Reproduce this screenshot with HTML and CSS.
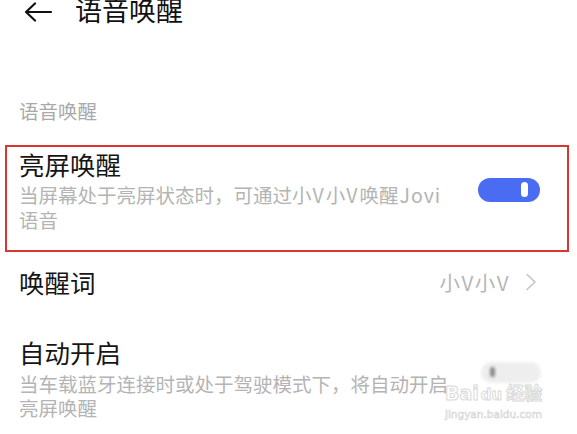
FILE: index.html
```html
<!DOCTYPE html>
<html lang="zh-CN">
<head>
<meta charset="utf-8">
<title>语音唤醒</title>
<link rel="stylesheet" href="styles.css">
</head>
<body>
<div class="page">
  <header class="topbar">
    <svg class="back" width="28" height="20" viewBox="0 0 28 20" aria-hidden="true">
      <path d="M27 10 H2 M11 1.5 L2 10 L11 18.5" fill="none" stroke="#111" stroke-width="2.2" stroke-linecap="round" stroke-linejoin="round"/>
    </svg>
    <h1 class="page-title">语音唤醒</h1>
  </header>

  <div class="section-label">语音唤醒</div>

  <div class="item item-highlight">
    <div class="item-text">
      <div class="item-title">亮屏唤醒</div>
      <div class="item-desc">当屏幕处于亮屏状态时，可通过小<span class="latin">V</span>小<span class="latin">V</span>唤醒<span class="latin">Jovi</span>语音</div>
    </div>
    <div class="switch switch-on"><span class="knob"></span></div>
  </div>

  <div class="item item-link">
    <div class="item-title">唤醒词</div>
    <div class="item-value">
      <span>小<span class="latin">V</span>小<span class="latin">V</span></span>
      <svg class="chevron" width="12" height="18" viewBox="0 0 12 18" aria-hidden="true">
        <path d="M2 1.5 L10 9 L2 16.5" fill="none" stroke="#c4c4c4" stroke-width="1.6" stroke-linecap="round" stroke-linejoin="round"/>
      </svg>
    </div>
  </div>

  <div class="item item-auto">
    <div class="item-text">
      <div class="item-title">自动开启</div>
      <div class="item-desc desc-tight">当车载蓝牙连接时或处于驾驶模式下，将自动开启亮屏唤醒</div>
    </div>
    <div class="switch switch-faded"><span class="knob-dark"></span></div>
  </div>

  <div class="watermark">
    <div class="wm-logo"><span class="wm-bai">Bai</span><span class="wm-du">du</span><span class="wm-jy">经验</span></div>
    <div class="wm-url">jingyan.baidu.com</div>
  </div>
</div>
</body>
</html>
```

FILE: styles.css
```css
html, body {
  margin: 0;
  padding: 0;
  background: #ffffff;
}

body {
  font-family: "Noto Sans CJK SC", "Noto Sans", sans-serif;
  color: #151515;
  overflow: hidden;
}

.page {
  position: relative;
  width: 577px;
  height: 434px;
  overflow: hidden;
}

.topbar {
  display: flex;
  align-items: center;
  height: 40px;
  margin-top: -10px;
  padding-left: 24px;
  gap: 23px;
}

.back {
  display: block;
  margin-top: 3px;
}

.page-title {
  margin: 0;
  font-size: 27px;
  font-weight: 400;
  line-height: 40px;
  color: #111;
}

.section-label {
  margin-top: 68px;
  padding-left: 19px;
  font-size: 19.5px;
  line-height: 26px;
  color: #a9a9a9;
}

.item {
  display: flex;
  justify-content: space-between;
  align-items: flex-start;
}

.item-highlight {
  margin: 21px 8px 0 5px;
  border: 2px solid #dc3430;
  padding: 2px 27px 18px 12px;
}

.item-text {
  width: 432px;
}

.item-title {
  font-size: 25.5px;
  line-height: 30px;
  color: #151515;
}

.item-desc {
  margin-top: 3px;
  font-size: 19.5px;
  line-height: 25px;
  color: #b4b4b4;
}

.latin {
  letter-spacing: 1px;
  margin: 0 1px;
}

.desc-tight {
  margin-top: 5px;
  line-height: 24px;
}

.switch {
  position: relative;
  width: 62px;
  height: 24px;
  border-radius: 12px;
  flex: none;
}

.switch-on {
  margin-top: 29px;
  background: #4a6cf2;
}

.knob {
  position: absolute;
  left: 43px;
  top: 4px;
  width: 7px;
  height: 15px;
  border-radius: 3.5px;
  background: #ffffff;
}

.item-link {
  margin-top: 15px;
  padding: 0 40px 0 19px;
  align-items: center;
}

.item-value {
  display: flex;
  align-items: center;
  gap: 15px;
  font-size: 20.5px;
  line-height: 30px;
  color: #b6b6b6;
}

.item-value .latin {
  letter-spacing: 0;
  margin: 0 1.5px;
}

.chevron {
  display: block;
}

.item-auto {
  margin-top: 40px;
  padding: 0 36px 0 19px;
}

.switch-faded {
  margin-top: 25px;
  background: #eeeeee;
  filter: blur(1.5px);
  width: 60px;
  height: 21px;
}

.knob-dark {
  position: absolute;
  left: 9px;
  top: 5px;
  width: 5px;
  height: 10px;
  border-radius: 2px;
  background: #8a8a8a;
}

.watermark {
  position: absolute;
  left: 445px;
  top: 380px;
  width: 110px;
  color: #e4e4e4;
  pointer-events: none;
}

.wm-logo {
  display: flex;
  align-items: baseline;
  font-family: "DejaVu Sans", sans-serif;
  font-size: 19px;
  line-height: 24px;
  font-weight: 700;
  color: #ffffff;
  -webkit-text-stroke: 1px #d9d9d9;
}

.wm-du {
  margin-left: 2px;
  font-size: 15px;
}

.wm-jy {
  margin-left: 4px;
  font-family: "Noto Sans CJK SC", sans-serif;
  font-size: 18px;
}

.wm-url {
  font-family: "DejaVu Sans", sans-serif;
  font-size: 10.5px;
  line-height: 14px;
  color: #ffffff;
  -webkit-text-stroke: 0.6px #d4d4d4;
}
```
